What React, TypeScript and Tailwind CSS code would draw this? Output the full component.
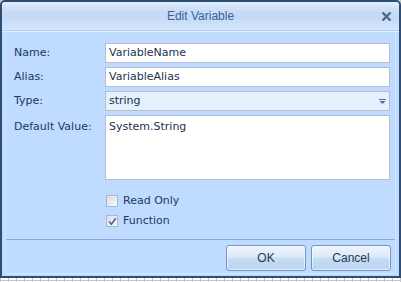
const labelFont = "font-['DejaVu_Sans',Verdana,sans-serif] text-[11px]";

function Field({ label, children, tall }: { label: string; children: React.ReactNode; tall?: boolean }) {
    return (
        <div className={`flex ${tall ? 'items-start' : 'items-center'}`}>
            <span className={`w-[99px] shrink-0 pl-[8px] text-[#1e395b] ${labelFont} ${tall ? 'pt-[4px]' : ''}`}>
                {label}
            </span>
            {children}
        </div>
    );
}

function TextInput({ value }: { value: string }) {
    return (
        <div className={`h-[20px] w-[285px] border border-[#b4c0d0] bg-white pl-[3px] leading-[18px] text-[#1a3350] ${labelFont}`}>
            {value}
        </div>
    );
}

function CheckBox({ label, checked }: { label: string; checked?: boolean }) {
    return (
        <div className="flex h-[12px] items-center">
            <span className="flex h-[12px] w-[12px] items-center justify-center border border-[#a9b7c9] bg-[linear-gradient(135deg,#d9dee6,#f6f8fb)]">
                {checked && (
                    <svg width="9" height="9" viewBox="0 0 9 9">
                        <path d="M1.2 4.6 L3.4 7.2 L7.8 1.2" fill="none" stroke="#4a6794" strokeWidth="1.6" />
                    </svg>
                )}
            </span>
            <span className={`ml-[5px] leading-[12px] text-[#1e395b] ${labelFont}`}>{label}</span>
        </div>
    );
}

function Button({ children }: { children: React.ReactNode }) {
    return (
        <button className="h-[26px] w-[80px] rounded-[3px] border border-[#7494bd] bg-[linear-gradient(to_bottom,#eef5fd_0%,#dce9f8_45%,#c3dbf3_55%,#bcd6f0_100%)] text-[12px] text-[#1e395b] font-['Liberation_Sans',Tahoma,sans-serif] shadow-[inset_0_0_0_1px_rgba(255,255,255,0.6)]">
            {children}
        </button>
    );
}

export default function App() {
    return (
        <div className="h-[282px] w-[401px] bg-white bg-[linear-gradient(to_right,#c8c8c8_1px,transparent_1px),linear-gradient(to_bottom,#c8c8c8_1px,transparent_1px)] bg-[size:8px_8px]">
            <div className="flex h-[278px] w-[401px] flex-col overflow-hidden rounded-t-[5px] border-[2px] border-[#2d4d75] bg-[#bfdbff]">
                <div className="relative flex h-[28px] shrink-0 items-center justify-center bg-[linear-gradient(to_bottom,#e3eefc_0%,#c6dbf6_35%,#c3d9f5_55%,#d6e7fc_100%)]">
                    <span className="text-[12px] text-[#3d5f99] font-['Liberation_Sans',Tahoma,sans-serif]">Edit Variable</span>
                    <svg className="absolute right-[7px] top-[10px]" width="11" height="9" viewBox="0 0 11 9">
                        <path d="M1.5 0.5 L9.5 8.5 M9.5 0.5 L1.5 8.5" stroke="#4d6a8a" strokeWidth="2.4" />
                    </svg>
                </div>
                <div className="h-px bg-[#b2cdf1]" />
                <div className="h-px bg-[#e2eeff]" />
                <div className="flex flex-1 flex-col px-[3px] pb-[2px]">
                    <div className="flex flex-1 flex-col border-x border-b border-[#d3e6ff]">
                        <div className="flex flex-col gap-[4px] pt-[11px]">
                            <Field label="Name:">
                                <TextInput value="VariableName" />
                            </Field>
                            <Field label="Alias:">
                                <TextInput value="VariableAlias" />
                            </Field>
                            <Field label="Type:">
                                <div className={`flex h-[20px] w-[285px] items-center justify-between border border-[#b4c0d0] bg-[#e6f0fc] pl-[3px] pr-[3px] text-[#1a3350] ${labelFont}`}>
                                    <span>string</span>
                                    <svg width="7" height="5" viewBox="0 0 7 5">
                                        <path d="M0 0.5 H7" stroke="#4e6fa6" strokeWidth="1" />
                                        <path d="M0.5 2 H6.5 L3.5 5 Z" fill="#4e6fa6" />
                                    </svg>
                                </div>
                            </Field>
                            <Field label="Default Value:" tall>
                                <div className={`h-[65px] w-[285px] border border-[#b4c0d0] bg-white pl-[3px] pt-[3px] text-[#1a3350] ${labelFont}`}>
                                    System.String
                                </div>
                            </Field>
                        </div>
                        <div className="ml-[100px] mt-[15px] flex flex-col gap-[8px]">
                            <CheckBox label="Read Only" />
                            <CheckBox label="Function" checked />
                        </div>
                        <div className="mt-[12px] h-px bg-[#8eaad0]" />
                        <div className="flex justify-end gap-[5px] pr-[4px] pt-[5px]">
                            <Button>OK</Button>
                            <Button>Cancel</Button>
                        </div>
                    </div>
                </div>
            </div>
        </div>
    );
}
